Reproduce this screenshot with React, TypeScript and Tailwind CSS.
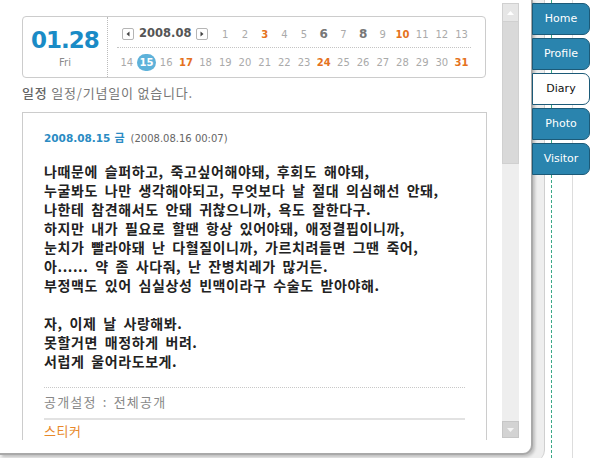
import React from "react";

const KR = "font-['Noto_Sans_CJK_KR',sans-serif]";
const DV = "font-['DejaVu_Sans',sans-serif]";

const orange = [3, 10, 17, 24, 31];
const boldDays = [6, 8];

function Day({ d }: { d: number }) {
  if (d === 15) {
    return (
      <div className="flex items-center justify-center">
        <span className="flex h-[17px] w-[20px] items-center justify-center rounded-full bg-[#5eb2da] text-[10px] font-bold text-white">
          15
        </span>
      </div>
    );
  }
  let cls = "text-[10px] text-[#aaaaaa]";
  if (orange.includes(d)) cls = "text-[10px] font-bold text-[#e5721d]";
  if (boldDays.includes(d)) cls = "text-[12px] font-bold text-[#777777]";
  return <div className={`flex items-center justify-center ${cls}`}>{d}</div>;
}

function NavBox({ dir }: { dir: "l" | "r" }) {
  return (
    <span className="flex h-[12px] w-[12px] items-center justify-center rounded-[2px] border border-[#b5b5b5] bg-white">
      <svg width="6" height="6" viewBox="0 0 6 6">
        {dir === "l" ? (
          <polygon points="4.5,0.5 4.5,5.5 1.5,3" fill="#444" />
        ) : (
          <polygon points="1.5,0.5 1.5,5.5 4.5,3" fill="#444" />
        )}
      </svg>
    </span>
  );
}

const lines1 = [
  "나때문에 슬퍼하고, 죽고싶어해야돼, 후회도 해야돼,",
  "누굴봐도 나만 생각해야되고, 무엇보다 날 절대 의심해선 안돼,",
  "나한테 참견해서도 안돼 귀찮으니까, 욕도 잘한다구.",
  "하지만 내가 필요로 할땐 항상 있어야돼, 애정결핍이니까,",
  "눈치가 빨라야돼 난 다혈질이니까, 가르치려들면 그땐 죽어,",
  "아...... 약 좀 사다줘, 난 잔병치레가 많거든.",
  "부정맥도 있어 심실상성 빈맥이라구 수술도 받아야해.",
];
const lines2 = ["자, 이제 날 사랑해봐.", "못할거면 매정하게 버려.", "서럽게 울어라도보게."];

const tabs = ["Home", "Profile", "Diary", "Photo", "Visitor"];

export default function App() {
  const row1 = Array.from({ length: 13 }, (_, i) => i + 1);
  const row2 = Array.from({ length: 18 }, (_, i) => i + 14);
  return (
    <div className="relative flex h-[458px] w-[600px] overflow-hidden bg-white">
      {/* outer frame */}
      <div className="h-[462px] w-[545px] shrink-0 rounded-br-[12px] border-r border-[#cfcfcf] bg-[#eeeeee]">
        <div className="flex h-[455px] w-[533px] rounded-br-[10px] border-b-2 border-r-2 border-[#a9a9a9] bg-white shadow-[2px_2px_3px_rgba(0,0,0,0.2)]">
          {/* content */}
          <div className="flex h-[440px] w-[500px] shrink-0 flex-col overflow-hidden pl-[22px] pt-[16px]">
            {/* date box */}
            <div className="flex h-[62px] w-[464px] shrink-0 rounded-[4px] border border-[#cccccc]">
              <div className="flex w-[84px] shrink-0 flex-col items-center pt-[10px]">
                <div className={`${DV} text-[23px] font-bold leading-[26px] tracking-[-1px] text-[#1a8bc6]`}>01.28</div>
                <div className={`${DV} mt-[4px] text-[10px] leading-[12px] text-[#8a8a8a]`}>Fri</div>
              </div>
              <div className="h-full border-l border-dotted border-[#bbbbbb]" />
              <div className={`${DV} flex flex-col pl-[9px] pt-[4px]`}>
                <div className="grid h-[27px] grid-cols-[repeat(18,19.7px)] border-b border-dotted border-[#c4c4c4]">
                  <div className="col-span-5 flex items-center pl-[5px]">
                    <NavBox dir="l" />
                    <span className="mx-[5px] text-[11.5px] font-bold text-[#555555]">2008.08</span>
                    <NavBox dir="r" />
                  </div>
                  {row1.map((d) => (
                    <Day key={d} d={d} />
                  ))}
                </div>
                <div className="grid h-[28px] grid-cols-[repeat(18,19.7px)]">
                  {row2.map((d) => (
                    <Day key={d} d={d} />
                  ))}
                </div>
              </div>
            </div>

            {/* no schedule */}
            <div className={`${KR} mt-[7px] text-[13px] leading-[16px] tracking-[0.8px] text-[#777777]`}>
              <span className="font-medium text-[#666666]">일정</span> 일정/기념일이 없습니다.
            </div>

            {/* entry box */}
            <div className="mt-[11px] w-[465px] shrink-0 border border-[#cccccc] px-[21px] pt-[17px]">
              <div className="flex items-baseline leading-[14px]">
                <span className={`${DV} text-[10.5px] font-bold text-[#2a8bc3]`}>2008.08.15</span>
                <span className={`${KR} ml-[4px] text-[11px] font-bold text-[#2a8bc3]`}>금</span>
                <span className={`${DV} ml-[6px] text-[10px] text-[#666666]`}>(2008.08.16 00:07)</span>
              </div>
              <div className={`${KR} mt-[16px] text-[14px] font-bold leading-[19px] tracking-[0.6px] [word-spacing:3px] text-[#222222]`}>
                {lines1.map((l) => (
                  <div key={l} className="whitespace-nowrap">{l}</div>
                ))}
                <div className="h-[19px]" />
                {lines2.map((l) => (
                  <div key={l} className="whitespace-nowrap">{l}</div>
                ))}
              </div>
              <div className="mt-[16px] border-t border-dotted border-[#c8c8c8] pb-[8px] pt-[6px]">
                <div className={`${KR} text-[13px] leading-[16px] tracking-[1.2px] [word-spacing:2px] text-[#888888]`}>공개설정 : 전체공개</div>
              </div>
              <div className="border-t-2 border-[#e2e2e2] pt-[3px]">
                <div className={`${KR} text-[13px] leading-[16px] tracking-[0.5px] text-[#e8892b]`}>스티커</div>
              </div>
              <div className="h-[40px]" />
            </div>
          </div>

          {/* scrollbar */}
          <div className="ml-[2px] mt-[3px] flex h-[435px] w-[17px] shrink-0 flex-col">
            <div className="flex h-[19px] items-center justify-center border border-[#d0d0d0] bg-[#e6e6e6]">
              <svg width="7" height="4" viewBox="0 0 7 4">
                <polygon points="0,4 7,4 3.5,0" fill="#ffffff" />
              </svg>
            </div>
            <div className="h-[142px] border-x border-b border-[#d0d0d0] bg-[#d9d9d9]" />
            <div className="flex-1 bg-[#eeeeee]" />
            <div className="flex h-[17px] items-center justify-center border border-[#c6c6c6] bg-[#d3d3d3]">
              <svg width="7" height="4" viewBox="0 0 7 4">
                <polygon points="0,0 7,0 3.5,4" fill="#f4f4f4" />
              </svg>
            </div>
          </div>
        </div>
      </div>

      {/* right guide lines */}
      <div className="w-[6px] shrink-0" />
      <div className="h-full w-[21px] shrink-0 border-l border-dashed border-[#3aa887]" />
      <div className="h-full flex-1 border-l border-[#dddddd]" />

      {/* tabs */}
      <div className="absolute left-[532px] top-[3px] flex flex-col gap-[3px]">
        {tabs.map((t) => {
          const active = t === "Diary";
          return (
            <div
              key={t}
              className={`flex h-[32px] w-[58px] items-center justify-center rounded-r-[7px] border-[1.5px] border-[#1c5a78] ${DV} text-[11px] ${
                active ? "bg-white text-[#111111]" : "bg-[#2a84ae] text-white"
              }`}
            >
              {t}
            </div>
          );
        })}
      </div>
    </div>
  );
}
